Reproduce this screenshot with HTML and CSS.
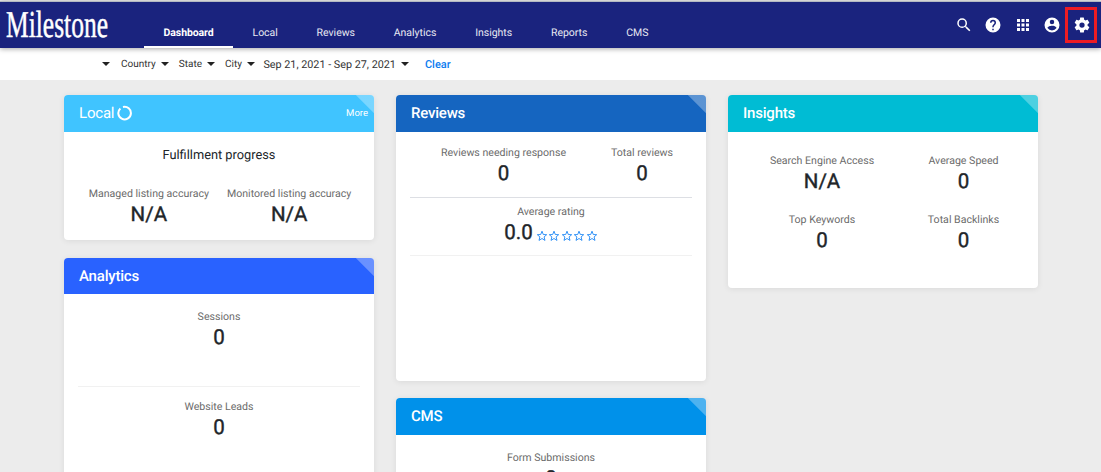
FILE: index.html
```html
<!DOCTYPE html>
<html lang="en">
<head>
    <meta charset="UTF-8">
    <meta name="viewport" content="width=device-width, initial-scale=1.0">
    <title>Milestone Dashboard</title>
    <link rel="stylesheet" href="styles.css">
</head>
<body>
    <header class="topbar">
        <svg class="logo" width="106" height="46" viewBox="0 0 106 46">
            <text class="logo-text" x="1" y="35" textLength="102" lengthAdjust="spacingAndGlyphs">Milestone</text>
        </svg>
        <nav class="tabs">
            <a class="tab active">Dashboard</a>
            <a class="tab">Local</a>
            <a class="tab">Reviews</a>
            <a class="tab">Analytics</a>
            <a class="tab">Insights</a>
            <a class="tab">Reports</a>
            <a class="tab">CMS</a>
        </nav>
        <div class="tools">
            <svg class="tool" viewBox="0 0 24 24"><path d="M15.5 14h-.79l-.28-.27A6.47 6.47 0 0 0 16 9.5 6.5 6.5 0 1 0 9.5 16c1.61 0 3.09-.59 4.23-1.57l.27.28v.79l5 4.99L20.49 19l-4.99-5zm-6 0a4.5 4.5 0 1 1 0-9 4.5 4.5 0 0 1 0 9z"/></svg>
            <svg class="tool" viewBox="0 0 24 24"><path d="M12 2a10 10 0 1 0 0 20 10 10 0 0 0 0-20zm1 17h-2v-2h2v2zm2.07-7.75-.9.92C13.45 12.9 13 13.5 13 15h-2v-.5c0-1.1.45-2.1 1.17-2.83l1.24-1.26c.37-.36.59-.86.59-1.41a2 2 0 1 0-4 0H8a4 4 0 1 1 8 0c0 .88-.36 1.68-.93 2.25z"/></svg>
            <svg class="tool" viewBox="0 0 24 24"><path d="M4 8h4V4H4v4zm6 12h4v-4h-4v4zm-6 0h4v-4H4v4zm0-6h4v-4H4v4zm6 0h4v-4h-4v4zm6-10v4h4V4h-4zm-6 4h4V4h-4v4zm6 6h4v-4h-4v4zm0 6h4v-4h-4v4z"/></svg>
            <svg class="tool" viewBox="0 0 24 24"><path d="M12 2a10 10 0 1 0 0 20 10 10 0 0 0 0-20zm0 3a3 3 0 1 1 0 6 3 3 0 0 1 0-6zm0 14.2a7.2 7.2 0 0 1-6-3.22c.03-1.99 4-3.08 6-3.08s5.97 1.09 6 3.08a7.2 7.2 0 0 1-6 3.22z"/></svg>
            <div class="tool-marked">
                <svg class="tool" viewBox="0 0 24 24"><path d="M19.43 12.98c.04-.32.07-.64.07-.98s-.03-.66-.07-.98l2.11-1.65c.19-.15.24-.42.12-.64l-2-3.46c-.12-.22-.39-.3-.61-.22l-2.49 1c-.52-.4-1.08-.73-1.69-.98l-.38-2.65A.49.49 0 0 0 14 2h-4c-.25 0-.46.18-.49.42l-.38 2.65c-.61.25-1.17.59-1.69.98l-2.49-1c-.23-.09-.49 0-.61.22l-2 3.46c-.13.22-.07.49.12.64l2.11 1.65c-.04.32-.07.65-.07.98s.03.66.07.98l-2.11 1.65c-.19.15-.24.42-.12.64l2 3.46c.12.22.39.3.61.22l2.49-1c.52.4 1.08.73 1.69.98l.38 2.65c.03.24.24.42.49.42h4c.25 0 .46-.18.49-.42l.38-2.65c.61-.25 1.17-.59 1.69-.98l2.49 1c.23.09.49 0 .61-.22l2-3.46c.12-.22.07-.49-.12-.64l-2.11-1.65zM12 15.5a3.5 3.5 0 1 1 0-7 3.5 3.5 0 0 1 0 7z"/></svg>
            </div>
        </div>
    </header>

    <div class="filters">
        <div class="account"><span class="caret"></span></div>
        <div class="filter">Country<span class="caret"></span></div>
        <div class="filter">State<span class="caret"></span></div>
        <div class="filter">City<span class="caret"></span></div>
        <div class="filter dates">Sep 21, 2021 - Sep 27, 2021<span class="caret"></span></div>
        <a class="clear">Clear</a>
    </div>

    <main class="board">
        <div class="column">
            <section class="card local">
                <h2 class="card-title">Local
                    <svg class="spinner" width="16" height="16" viewBox="0 0 16 16"><path d="M3.4 3.4A6.3 6.3 0 1 0 6 2"/></svg>
                    <span class="more">More</span>
                </h2>
                <div class="progress">Fulfillment progress</div>
                <div class="pair">
                    <div class="stat"><span class="label">Managed listing accuracy</span><span class="value">N/A</span></div>
                    <div class="stat"><span class="label">Monitored listing accuracy</span><span class="value">N/A</span></div>
                </div>
            </section>

            <section class="card analytics">
                <h2 class="card-title">Analytics</h2>
                <div class="block">
                    <div class="stat"><span class="label">Sessions</span><span class="value">0</span></div>
                </div>
                <div class="block">
                    <div class="stat"><span class="label">Website Leads</span><span class="value">0</span></div>
                </div>
            </section>
        </div>

        <div class="column">
            <section class="card reviews">
                <h2 class="card-title">Reviews</h2>
                <div class="counts">
                    <div class="stat"><span class="label">Reviews needing response</span><span class="value">0</span></div>
                    <div class="stat"><span class="label">Total reviews</span><span class="value">0</span></div>
                </div>
                <div class="rating">
                    <span class="label">Average rating</span>
                    <div class="score">
                        <span class="value">0.0</span>
                        <div class="stars">
                            <svg class="star" viewBox="0 0 12 12"><path d="M6 1.2l1.3 3.3 3.4.2-2.6 2.2.9 3.5L6 8.5l-3 1.9.9-3.5L1.3 4.7l3.4-.2z"/></svg>
                            <svg class="star" viewBox="0 0 12 12"><path d="M6 1.2l1.3 3.3 3.4.2-2.6 2.2.9 3.5L6 8.5l-3 1.9.9-3.5L1.3 4.7l3.4-.2z"/></svg>
                            <svg class="star" viewBox="0 0 12 12"><path d="M6 1.2l1.3 3.3 3.4.2-2.6 2.2.9 3.5L6 8.5l-3 1.9.9-3.5L1.3 4.7l3.4-.2z"/></svg>
                            <svg class="star" viewBox="0 0 12 12"><path d="M6 1.2l1.3 3.3 3.4.2-2.6 2.2.9 3.5L6 8.5l-3 1.9.9-3.5L1.3 4.7l3.4-.2z"/></svg>
                            <svg class="star" viewBox="0 0 12 12"><path d="M6 1.2l1.3 3.3 3.4.2-2.6 2.2.9 3.5L6 8.5l-3 1.9.9-3.5L1.3 4.7l3.4-.2z"/></svg>
                        </div>
                    </div>
                </div>
            </section>

            <section class="card cms">
                <h2 class="card-title">CMS</h2>
                <div class="block">
                    <div class="stat"><span class="label">Form Submissions</span><span class="value">0</span></div>
                </div>
            </section>
        </div>

        <div class="column">
            <section class="card insights">
                <h2 class="card-title">Insights</h2>
                <div class="quad">
                    <div class="stat"><span class="label">Search Engine Access</span><span class="value">N/A</span></div>
                    <div class="stat"><span class="label">Average Speed</span><span class="value">0</span></div>
                    <div class="stat"><span class="label">Top Keywords</span><span class="value">0</span></div>
                    <div class="stat"><span class="label">Total Backlinks</span><span class="value">0</span></div>
                </div>
            </section>
        </div>
    </main>
</body>
</html>
```
FILE: styles.css
```css
* {
    box-sizing: border-box;
}

body {
    margin: 0;
    height: 472px;
    overflow: hidden;
    display: flex;
    flex-direction: column;
    background-color: #ececec;
    font-family: Roboto, sans-serif;
    font-size: 10.5px;
    color: #212529;
    text-rendering: geometricPrecision;
}

/* header */
.topbar {
    position: relative;
    display: flex;
    flex: none;
    height: 47px;
    margin-top: 1px;
    padding-left: 5px;
    border-top: 1px solid #b4b9c2;
    background-color: #1a237e;
    box-shadow: 0 1px 5px rgba(0, 0, 0, 0.35);
}

.logo {
    flex: none;
    overflow: visible;
}

.logo-text {
    font-family: "Liberation Serif", serif;
    font-size: 38px;
    fill: #fff;
    stroke: #fff;
    stroke-width: 0.5px;
}

.tabs {
    display: flex;
    align-items: flex-end;
    margin-left: 33px;
}

.tab {
    height: 25px;
    padding: 0 19.4px;
    line-height: 20px;
    letter-spacing: -0.02px;
    color: #e8e9f2;
    border-bottom: 2px solid transparent;
}

.tab.active {
    color: #fff;
    font-weight: 700;
    letter-spacing: -0.1px;
    padding: 0 19.6px;
    border-bottom-color: #fff;
}

.tools {
    display: flex;
    align-items: center;
    gap: 11.2px;
    margin-left: auto;
    padding-right: 4px;
}

.tool {
    display: block;
    width: 18px;
    height: 18px;
    fill: #fff;
}

.tool-marked {
    width: 32px;
    height: 36px;
    padding: 6px 5px;
    margin-left: -7px;
    border: 3px solid #ed1c24;
}

/* filters */
.filters {
    display: flex;
    align-items: center;
    flex: none;
    height: 32px;
    background-color: #fff;
    font-size: 10px;
    color: #333;
}

.account {
    display: flex;
    align-items: center;
    justify-content: flex-end;
    width: 110px;
    height: 32px;
    margin-right: 11px;
}

.filter {
    display: flex;
    align-items: center;
    margin-right: 10px;
}

.caret {
    margin-left: 5px;
    border-top: 4px solid #222;
    border-left: 4px solid transparent;
    border-right: 4px solid transparent;
}

.dates {
    font-size: 10.8px;
    margin-left: -1.5px;
    margin-right: 16px;
}

.clear {
    font-size: 11px;
    color: #0c7cf0;
    font-weight: 500;
}

/* cards */
.board {
    display: grid;
    grid-template-columns: repeat(3, 310px);
    column-gap: 22px;
    padding: 15px 0 0 64px;
}

.column {
    display: flex;
    flex-direction: column;
    gap: 18px;
}

.card {
    flex: none;
    overflow: hidden;
    background-color: #fff;
    border-radius: 4px;
    box-shadow: 0 1px 6px rgba(0, 0, 0, 0.08);
}

.card-title {
    display: flex;
    align-items: center;
    height: 37px;
    margin: 0;
    padding: 0 6px 1px 15px;
    font-size: 15px;
    font-weight: 500;
    letter-spacing: -0.2px;
    color: #fff;
    /* folded corner */
    background-image: linear-gradient(225deg, rgba(255, 255, 255, 0.3) 49%, transparent 52%);
    background-size: 18px 18px;
    background-position: top right;
    background-repeat: no-repeat;
}

.local {
    height: 145px;
}

.local .card-title {
    font-weight: 400;
    background-color: #40c4ff;
}

.analytics {
    height: 260px;
}

.analytics .card-title {
    height: 36px;
    background-color: #2962ff;
}

.reviews {
    height: 286px;
}

.reviews .card-title {
    background-color: #1565c0;
}

.cms {
    height: 260px;
    margin-top: -1px;
}

.cms .card-title {
    background-color: #0091ea;
}

.insights {
    height: 193px;
}

.insights .card-title {
    background-color: #00bcd4;
}

.spinner {
    margin-left: 3px;
    fill: none;
    stroke: #fff;
    stroke-width: 2;
}

.more {
    margin-left: auto;
    font-size: 9.5px;
    letter-spacing: 0;
}

.stat {
    text-align: center;
}

.label {
    display: block;
    font-size: 10.6px;
    line-height: 14px;
    color: #6b6b6b;
}

.value {
    display: block;
    font-size: 20.5px;
    font-weight: 400;
    line-height: 28px;
    -webkit-text-stroke: 0.4px #212529;
}

.progress {
    padding-top: 16px;
    font-size: 12.8px;
    line-height: 16px;
    text-align: center;
}

.pair {
    display: flex;
    justify-content: center;
    gap: 18px;
    padding: 23px 0 0 2px;
}

.block {
    height: 93px;
    margin: 0 14px;
    padding-top: 16px;
    border-bottom: 1px solid #f1f1f1;
}

.block + .block {
    padding-top: 13px;
}

.counts {
    display: flex;
    height: 66px;
    margin: 0 14px;
    padding: 14px 19px 0 31px;
    justify-content: space-between;
    border-bottom: 1px solid #dddfe4;
}

.rating {
    height: 58px;
    margin: 0 14px;
    padding-top: 7px;
    text-align: center;
    border-bottom: 1px solid #f1f1f1;
}

.score {
    display: flex;
    justify-content: center;
    align-items: center;
}

.stars {
    display: flex;
    gap: 0.5px;
    margin: 5px 0 0 3px;
}

.star {
    width: 12px;
    height: 12px;
    fill: none;
    stroke: #1e88f5;
    stroke-width: 0.9;
}

.quad {
    display: grid;
    grid-template-columns: 142px 141px;
    row-gap: 17px;
    padding: 22px 0 0 23px;
}
```
